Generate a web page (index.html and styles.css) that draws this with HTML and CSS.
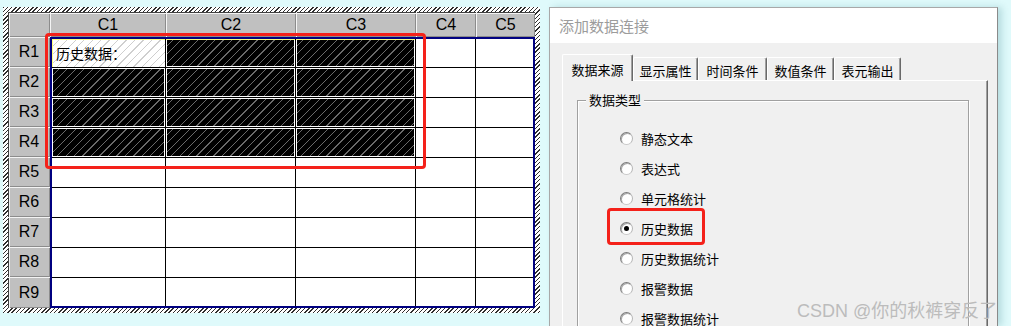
FILE: index.html
```html
<!DOCTYPE html>
<html lang="zh">
<head>
<meta charset="utf-8">
<title>添加数据连接</title>
<link rel="stylesheet" href="styles.css">
</head>
<body>
<div class="sheet">
  <div class="inner">
    <div class="corner"></div>
    <div class="colheads">
      <div class="ch w1">C1</div>
      <div class="ch w2">C2</div>
      <div class="ch w3">C3</div>
      <div class="ch w4">C4</div>
      <div class="ch w5">C5</div>
    </div>
    <div class="rowheads">
      <div class="rh">R1</div>
      <div class="rh">R2</div>
      <div class="rh">R3</div>
      <div class="rh">R4</div>
      <div class="rh">R5</div>
      <div class="rh">R6</div>
      <div class="rh">R7</div>
      <div class="rh">R8</div>
      <div class="rh last">R9</div>
    </div>
    <div class="data">
      <div class="c s0">历史数据：</div><div class="c s top"></div><div class="c s top"></div><div class="c"></div><div class="c"></div>
      <div class="c s"></div><div class="c s"></div><div class="c s"></div><div class="c"></div><div class="c"></div>
      <div class="c s"></div><div class="c s"></div><div class="c s"></div><div class="c"></div><div class="c"></div>
      <div class="c s"></div><div class="c s"></div><div class="c s"></div><div class="c"></div><div class="c"></div>
      <div class="c"></div><div class="c"></div><div class="c"></div><div class="c"></div><div class="c"></div>
      <div class="c"></div><div class="c"></div><div class="c"></div><div class="c"></div><div class="c"></div>
      <div class="c"></div><div class="c"></div><div class="c"></div><div class="c"></div><div class="c"></div>
      <div class="c"></div><div class="c"></div><div class="c"></div><div class="c"></div><div class="c"></div>
      <div class="c"></div><div class="c"></div><div class="c"></div><div class="c"></div><div class="c"></div>
    </div>
  </div>
</div>

<div class="dialog">
  <div class="titlebar">添加数据连接</div>
  <div class="dbody">
    <div class="tabs">
      <div class="tab sel t1">数据来源</div>
      <div class="tab t2">显示属性</div>
      <div class="tab t3">时间条件</div>
      <div class="tab t4">数值条件</div>
      <div class="tab t5">表元输出</div>
    </div>
    <div class="panel">
      <fieldset class="group">
        <legend>数据类型</legend>
        <div class="opts">
          <div class="opt"><span class="radio"></span><span>静态文本</span></div>
          <div class="opt"><span class="radio"></span><span>表达式</span></div>
          <div class="opt"><span class="radio"></span><span>单元格统计</span></div>
          <div class="opt"><span class="radio on"></span><span>历史数据</span></div>
          <div class="opt"><span class="radio"></span><span>历史数据统计</span></div>
          <div class="opt"><span class="radio"></span><span>报警数据</span></div>
          <div class="opt"><span class="radio"></span><span>报警数据统计</span></div>
        </div>
      </fieldset>
    </div>
  </div>
</div>

<div class="hl hl-sheet"></div>
<div class="hl hl-radio"></div>
<div class="watermark">CSDN @你的秋裤穿反了</div>
</body>
</html>
```

FILE: styles.css
```css
html, body {
  margin: 0;
  padding: 0;
}
body {
  width: 1011px;
  height: 326px;
  overflow: hidden;
  position: relative;
  background: #dffafb;
  display: flex;
  align-items: flex-start;
  font-family: "Liberation Sans", "Noto Sans CJK SC", sans-serif;
}

/* ---------- spreadsheet ---------- */
.sheet {
  flex: none;
  margin: 7px 0 0 3px;
  padding: 5px;
  background: repeating-linear-gradient(135deg, #2e2e2e 0 1px, #ffffff 1px 3px);
}
.inner {
  display: grid;
  grid-template-columns: 42px 485px;
  grid-template-rows: 25px 271px;
  background: #fff;
}
.corner, .ch, .rh {
  background: #c0c0c0;
  box-shadow: inset 1px 1px 0 #f4f4f4, inset -1px -1px 0 #8c8c8c;
  display: flex;
  align-items: center;
  justify-content: center;
  font-size: 16px;
  color: #000;
  box-sizing: border-box;
}
.corner {
  box-shadow: inset 1px 1px 0 #404040, inset 2px 2px 0 #f4f4f4, inset -1px -1px 0 #8c8c8c;
}
.colheads {
  display: flex;
}
.ch {
  height: 25px;
  box-shadow: inset 1px 0 0 #f4f4f4, inset 0 1px 0 #404040, inset 0 2px 0 #f4f4f4, inset -1px -1px 0 #8c8c8c;
}
.w1 { width: 116px; }
.w2 { width: 130px; }
.w3 { width: 120px; }
.w4 { width: 60px; }
.w5 { width: 59px; }
.rowheads {
  display: flex;
  flex-direction: column;
}
.rh {
  height: 30px;
  box-shadow: inset 0 1px 0 #f4f4f4, inset 1px 0 0 #404040, inset 2px 0 0 #f4f4f4, inset -1px -1px 0 #8c8c8c;
}
.rh.last { height: 31px; }

.data {
  border: 2px solid #000080;
  display: grid;
  grid-template-columns: 114px 130px 120px 60px 57px;
  grid-template-rows: 29px repeat(7, 30px) 28px;
  background: #fff;
}
.c {
  border-right: 1px solid #000;
  border-bottom: 1px solid #000;
}
.c:nth-child(5n) { border-right: none; }
.c:nth-last-child(-n+5) { border-bottom: none; }

.s {
  background: repeating-linear-gradient(135deg, #000 0 5px, #6a6a6a 5px 5.8px, #000 5.8px 6px);
  box-shadow: inset 0 0 0 1px #fff;
}
.s.top {
  box-shadow: inset 0 1px 0 #ffff80, inset 0 0 0 1px #fff;
}
.s0 {
  background: repeating-linear-gradient(135deg, #fff 0 5px, #cfcfcf 5px 5.8px, #fff 5.8px 6px);
  box-shadow: inset 0 1px 0 #ffff80, inset 1px 0 0 #ffff80;
  font-family: "Noto Sans CJK SC", sans-serif;
  font-size: 14px;
  color: #000;
  display: flex;
  align-items: center;
  padding-left: 4px;
}

/* ---------- dialog ---------- */
.dialog {
  flex: none;
  box-sizing: border-box;
  width: 449px;
  height: 319px;
  overflow: hidden;
  margin: 7px 0 0 9px;
  border: 1px solid #a8a8a8;
  border-right-color: #8a8a8a;
  border-bottom: none;
  background: #f0f0f0;
  box-shadow: 4px 0 7px rgba(0, 90, 100, 0.18);
}
.titlebar {
  height: 35px;
  background: #fff;
  color: #9c9c9c;
  font: 15px "Noto Sans CJK SC", sans-serif;
  padding-left: 9px;
  display: flex;
  align-items: center;
}
.dbody {
  padding: 11px 0 0 12px;
}
.tabs {
  display: flex;
  align-items: flex-start;
  height: 27px;
  margin-bottom: -1px;
  position: relative;
  z-index: 1;
}
.tab {
  box-sizing: border-box;
  height: 23px;
  margin-top: 3px;
  padding-top: 3px;
  border-top: 1px solid #fff;
  border-left: 1px solid #fff;
  border-right: 1px solid #696969;
  box-shadow: inset -1px 0 0 #a0a0a0;
  border-radius: 2px 2px 0 0;
  background: #f0f0f0;
  font: 13px "Noto Sans CJK SC", sans-serif;
  color: #000;
  display: flex;
  align-items: center;
  justify-content: center;
}
.tab.sel {
  height: 27px;
  margin-top: 0;
  padding-top: 3px;
}
.t1 { width: 71px; }
.t2 { width: 65px; }
.t3 { width: 69px; }
.t4 { width: 67px; }
.t5 { width: 67px; }

.panel {
  box-sizing: border-box;
  width: 426px;
  height: 246px;
  border-top: 1px solid #fff;
  border-left: 1px solid #fff;
  border-right: 1px solid #696969;
  box-shadow: inset -1px 0 0 #a0a0a0;
  padding: 10px 0 0 14px;
}
.group {
  box-sizing: border-box;
  width: 392px;
  height: 236px;
  overflow: hidden;
  margin: 0;
  padding: 0 0 0 8px;
  border: 1px solid #a0a0a0;
  border-bottom: none;
  box-shadow: inset 1px 1px 0 #fff, 1px 1px 0 #fff;
}
.group legend {
  font: 13px "Noto Sans CJK SC", sans-serif;
  line-height: 18px;
  padding: 0 3px;
  margin-left: 0;
  background: #f0f0f0;
  color: #000;
}
.opts {
  padding: 14px 0 0 34px;
}
.opt {
  height: 30px;
  display: flex;
  align-items: center;
  font: 13px "Noto Sans CJK SC", sans-serif;
  color: #000;
}
.radio {
  flex: none;
  box-sizing: border-box;
  width: 13px;
  height: 13px;
  margin-right: 8px;
  border-radius: 50%;
  border: 1px solid #7c7c7c;
  border-right-color: #b4b4b4;
  border-bottom-color: #c8c8c8;
  background: #fff;
  box-shadow: inset 1px 1px 0 #a8a8a8;
  display: flex;
  align-items: center;
  justify-content: center;
}
.radio.on::after {
  content: "";
  width: 5px;
  height: 5px;
  border-radius: 50%;
  background: #000;
}

/* ---------- overlays ---------- */
.hl {
  position: absolute;
  box-sizing: border-box;
  border: 3px solid #f4211a;
  border-radius: 4px;
}
.hl-sheet {
  left: 45px;
  top: 33px;
  width: 381px;
  height: 136px;
}
.hl-radio {
  left: 607px;
  top: 208px;
  width: 98px;
  height: 37px;
}
.watermark {
  position: absolute;
  left: 797px;
  top: 296px;
  font: 18px "Liberation Sans", "Noto Sans CJK SC", sans-serif;
  color: #bcbcbc;
  white-space: nowrap;
}
```
